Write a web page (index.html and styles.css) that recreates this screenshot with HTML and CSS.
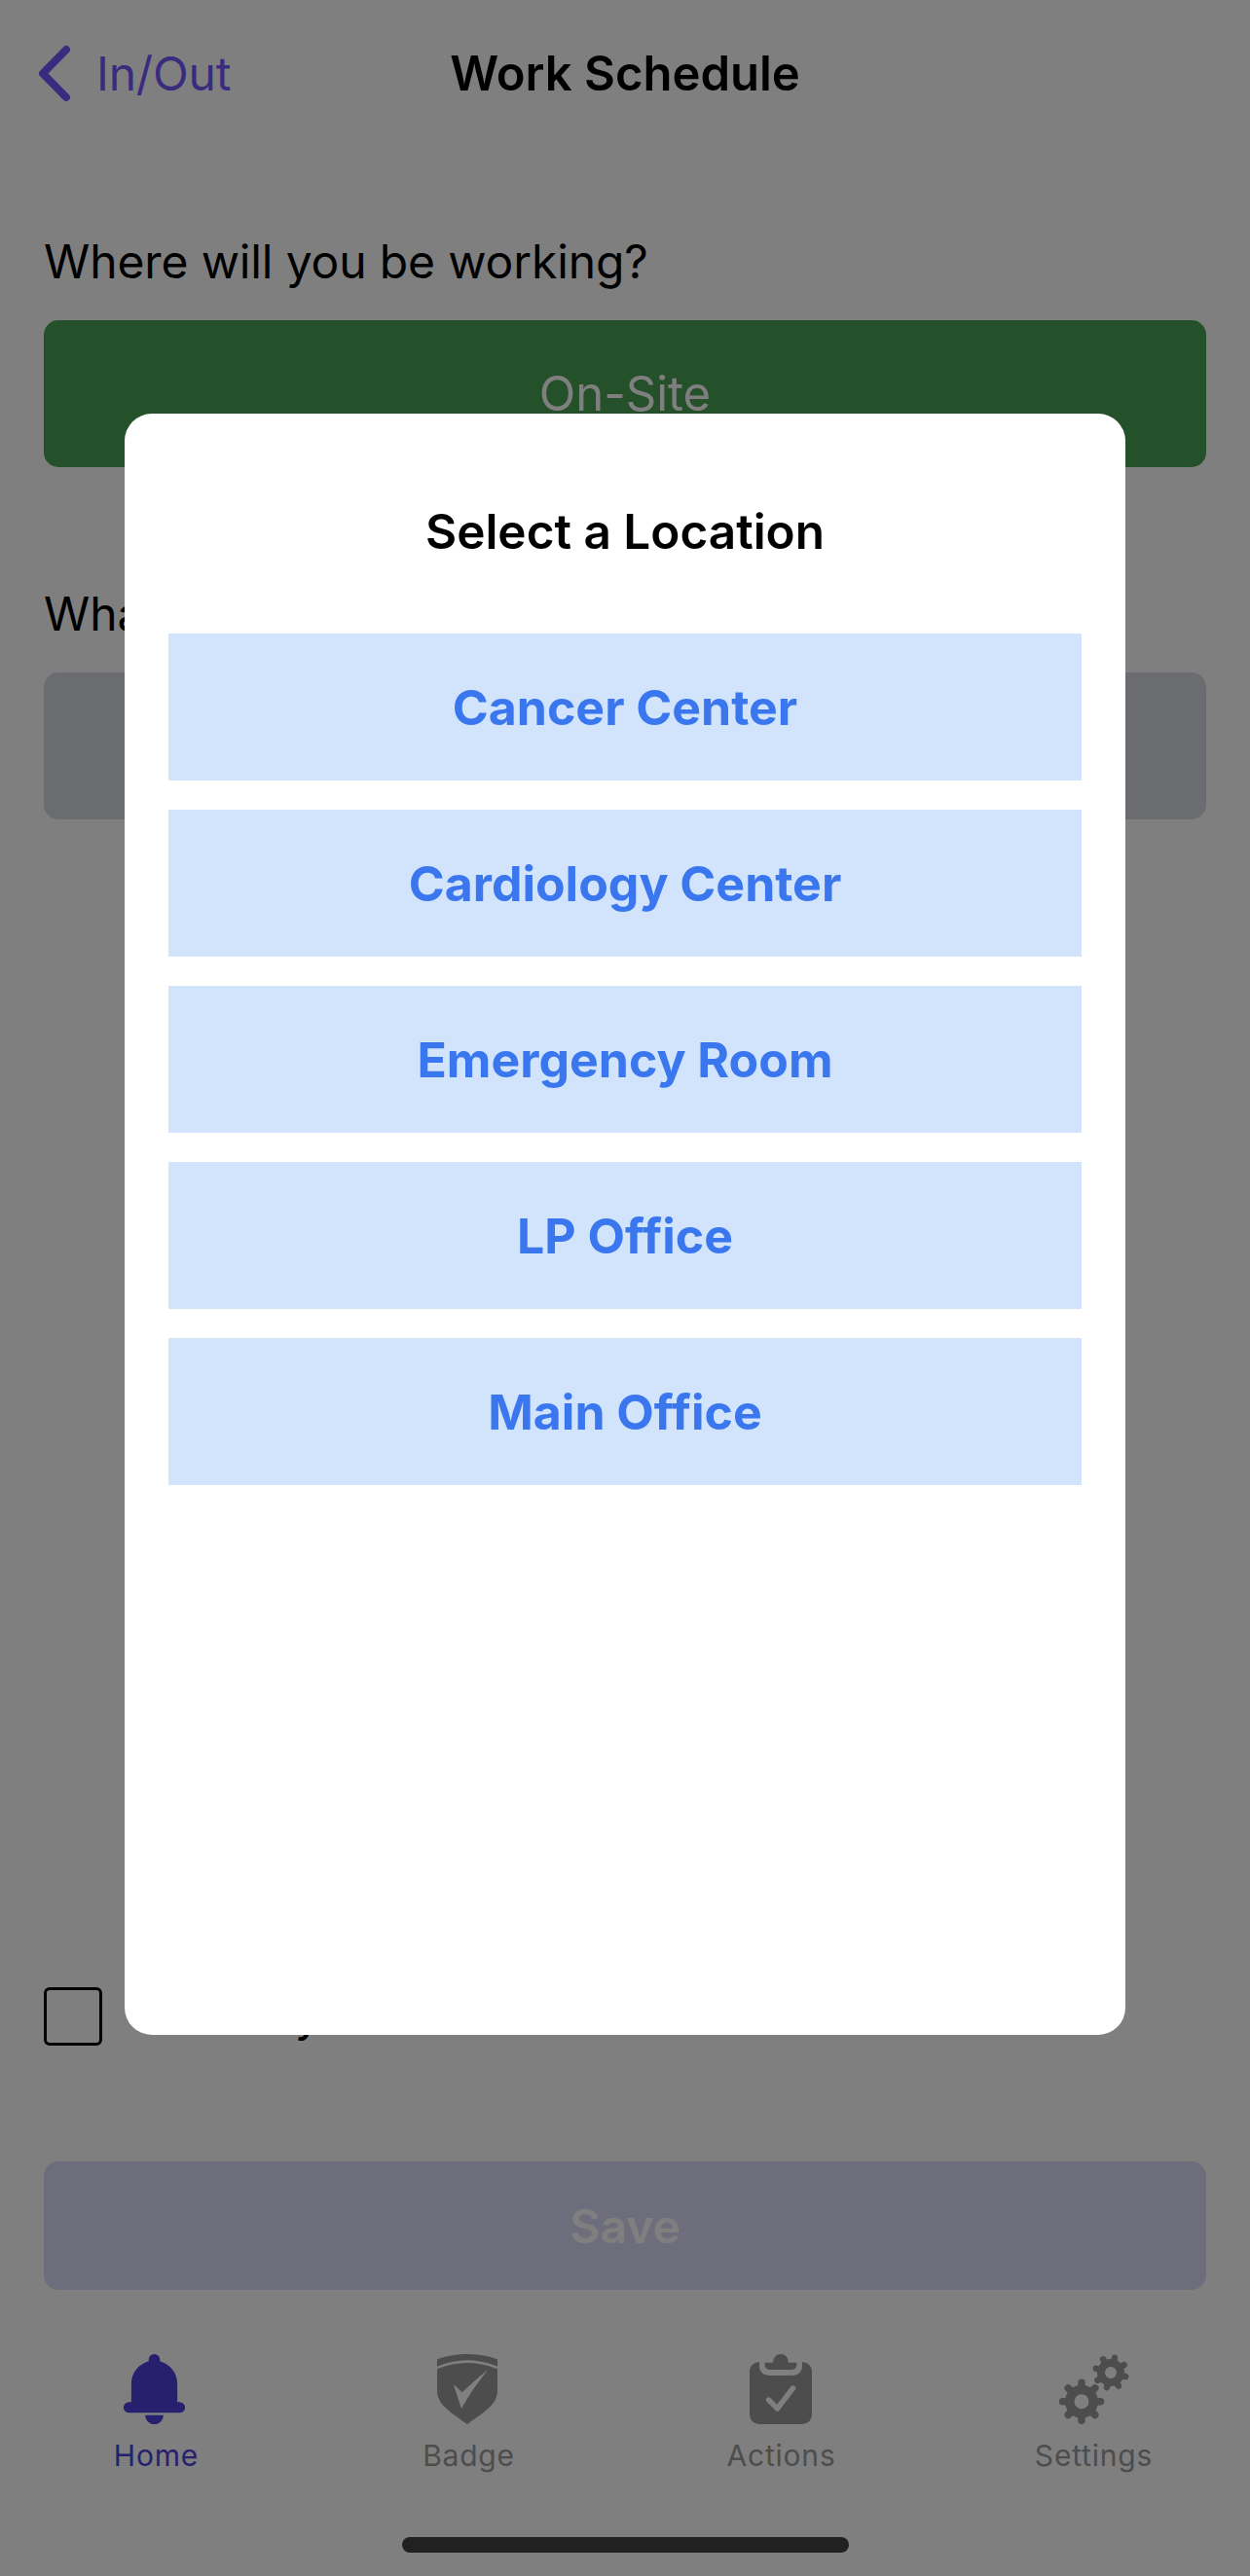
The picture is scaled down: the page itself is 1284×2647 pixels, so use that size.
FILE: index.html
```html
<!DOCTYPE html>
<html lang="en">
<head>
<meta charset="utf-8">
<title>Work Schedule</title>
<link rel="stylesheet" href="styles.css">
</head>
<body>
<div class="app">
  <header class="header">
    <div class="back">
      <svg class="chevron" viewBox="0 0 36 60" aria-hidden="true"><path d="M31 5L7 29.5L31 54"/></svg>
      <span class="back-label">In/Out</span>
    </div>
    <h1 class="title">Work Schedule</h1>
  </header>
  <main class="content">
    <section class="field">
      <h2 class="question">Where will you be working?</h2>
      <div class="pick pick-green">On-Site</div>
    </section>
    <section class="field field-second">
      <h2 class="question">What location will you be at?</h2>
      <div class="pick pick-gray"></div>
    </section>
    <label class="check-row">
      <span class="checkbox"></span>
      <span class="check-label">All Day</span>
    </label>
    <div class="save">Save</div>
  </main>
  <nav class="tabs">
    <div class="tab tab-active">
      <svg class="tab-icon icon-bell" viewBox="0 0 176 216" preserveAspectRatio="none" aria-hidden="true"><path d="M88 0a16 16 0 0 1 16 16v6C134 32 154 58 154 92V148h6a16.5 16.5 0 0 1 0 33H16a16.5 16.5 0 0 1 0-33h6V92C22 58 42 32 72 22V16A16 16 0 0 1 88 0Z"/><path d="M62 188H114C114 204 102 216 88 216S62 204 62 188Z"/></svg>
      <span class="tab-label">Home</span>
    </div>
    <div class="tab">
      <svg class="tab-icon icon-shield" viewBox="0 0 174 216" preserveAspectRatio="none" aria-hidden="true"><path d="M0 16C30 4 60 0 87 0S144 4 174 16V38C144 25 114 19 87 19S30 25 0 38Z"/><path fill-rule="evenodd" d="M0 46C30 33 60 27 87 27S144 33 174 46V112C174 150 150 170 87 216C24 170 0 150 0 112ZM47 93L70 168C90 130 118 85 147 48C115 75 90 100 72 118C65 110 55 100 47 93Z"/></svg>
      <span class="tab-label">Badge</span>
    </div>
    <div class="tab">
      <svg class="tab-icon icon-clip" viewBox="0 0 180 216" preserveAspectRatio="none" aria-hidden="true"><path d="M28 24V36C28 54 40 66 58 66H122C140 66 152 54 152 36V24C170 26 180 38 180 54V188A28 28 0 0 1 152 216H28A28 28 0 0 1 0 188V54C0 38 10 26 28 24Z"/><path d="M44 26H68C68 10 78 0 90 0S112 10 112 26H136V34C136 42 130 48 122 48H58C50 48 44 42 44 34Z"/><path class="tab-cut" d="M55 141L80 168L125 105"/></svg>
      <span class="tab-label">Actions</span>
    </div>
    <div class="tab">
      <svg class="tab-icon icon-gears" viewBox="0 0 72 72" aria-hidden="true">
        <g class="gear-teeth">
          <path class="gear-big" d="M3.5 48.7H42.5M23 29.2V68.2M9.2 34.9L36.8 62.5M9.2 62.5L36.8 34.9"/>
          <path class="gear-small" d="M37.8 14.94L68.2 23.06M45.15 5.4L60.85 32.6M57.06 3.8L48.94 34.2M66.6 11.15L39.4 26.85"/>
        </g>
        <circle cx="23" cy="48.7" r="17"/>
        <circle cx="53" cy="19" r="14"/>
        <circle class="gear-hole" cx="23" cy="48.7" r="7.5"/>
        <circle class="gear-hole" cx="53" cy="19" r="6"/>
      </svg>
      <span class="tab-label">Settings</span>
    </div>
  </nav>
  <div class="home-bar"></div>

  <div class="overlay">
    <div class="modal">
      <h2 class="modal-title">Select a Location</h2>
      <ul class="options">
        <li class="option">Cancer Center</li>
        <li class="option">Cardiology Center</li>
        <li class="option">Emergency Room</li>
        <li class="option">LP Office</li>
        <li class="option">Main Office</li>
      </ul>
    </div>
  </div>
</div>
</body>
</html>
```
FILE: styles.css
```css
* { box-sizing: border-box; }
html, body { margin: 0; padding: 0; background: #fff; }
body { font-family: Inter, "Liberation Sans", sans-serif; color: #000; }
h1, h2, ul { margin: 0; padding: 0; font: inherit; }
ul { list-style: none; }

.app {
  position: relative;
  width: 1284px;
  height: 2647px;
  overflow: hidden;
  display: flex;
  flex-direction: column;
  background: #fff;
}

.header {
  position: relative;
  height: 150px;
  padding-top: 46px;
  flex: none;
}
.back {
  display: flex;
  align-items: center;
  gap: 26px;
  padding-left: 37px;
  height: 60px;
  color: #7358ff;
}
.chevron { width: 36px; height: 60px; flex: none; }
.chevron path {
  fill: none;
  stroke: #7358ff;
  stroke-width: 8;
  stroke-linecap: round;
  stroke-linejoin: round;
}
.back-label { font-size: 48px; line-height: 60px; letter-spacing: -0.2px; }
.title {
  position: absolute;
  left: 0;
  right: 0;
  top: 46px;
  text-align: center;
  font-size: 49px;
  line-height: 60px;
  font-weight: 600;
}

.content {
  flex: 1;
  padding: 90px 45px 0;
  display: flex;
  flex-direction: column;
}
.field { display: flex; flex-direction: column; gap: 31px; }
.field-second { margin-top: 122px; }
.question { font-size: 48px; line-height: 58px; font-weight: 400; letter-spacing: -0.13px; }
.pick {
  height: 151px;
  border-radius: 15px;
  display: flex;
  align-items: center;
  justify-content: center;
  font-size: 49px;
  color: #fff;
}
.pick-green { background: #48a252; }
.pick-gray { background: #d6d8e0; }

.check-row {
  margin-top: 1200px;
  display: flex;
  align-items: center;
  gap: 67px;
  height: 60px;
}
.checkbox {
  width: 60px;
  height: 60px;
  flex: none;
  border: 3px solid #000;
  border-radius: 6px;
}
.check-label { font-size: 48px; line-height: 58px; margin-bottom: 5px; }

.save {
  margin-top: 119px;
  height: 132px;
  border-radius: 15px;
  background: #dcdaf6;
  color: #fff;
  display: flex;
  align-items: center;
  justify-content: center;
  font-size: 48px;
  font-weight: 600;
}

.tabs {
  flex: none;
  height: 228px;
  display: grid;
  grid-template-columns: repeat(4, 321px);
  color: #9a9a9a;
}
.tab {
  display: flex;
  flex-direction: column;
  align-items: center;
}
.tab-active { color: #4e40de; }
.tab-icon { height: 72px; fill: currentColor; display: block; }
.icon-bell { width: 63px; margin-right: 4px; }
.icon-shield { width: 62px; margin-right: 3px; }
.icon-clip { width: 64px; margin-right: 2px; }
.icon-gears { width: 72px; }
.tab-cut {
  fill: none;
  stroke: #fff;
  stroke-width: 16;
  stroke-linecap: round;
  stroke-linejoin: round;
}
.gear-teeth { fill: none; stroke: currentColor; stroke-linecap: round; }
.gear-big { stroke-width: 7.5; }
.gear-small { stroke-width: 6.5; }
.gear-hole { fill: #fff; }
.tab-label {
  margin-top: 14px;
  font-size: 30px;
  line-height: 36px;
  letter-spacing: 0.8px;
}

.home-bar {
  position: absolute;
  left: 413px;
  top: 2607px;
  width: 459px;
  height: 16px;
  border-radius: 8px;
  background: #424242;
}

.overlay {
  position: absolute;
  inset: 0;
  background: rgba(0, 0, 0, 0.5);
  display: flex;
  justify-content: center;
  align-items: flex-start;
  padding-top: 425px;
}
.modal {
  width: 1028px;
  height: 1666px;
  background: #fff;
  border-radius: 28px;
  padding: 0 45px;
}
.modal-title {
  height: 226px;
  padding-top: 91px;
  text-align: center;
  font-size: 49.5px;
  line-height: 60px;
  font-weight: 600;
}
.options { display: flex; flex-direction: column; gap: 30px; }
.option {
  height: 151px;
  background: #d2e3fc;
  color: #3a77ee;
  display: flex;
  align-items: center;
  justify-content: center;
  font-size: 50px;
  font-weight: 700;
}
```
